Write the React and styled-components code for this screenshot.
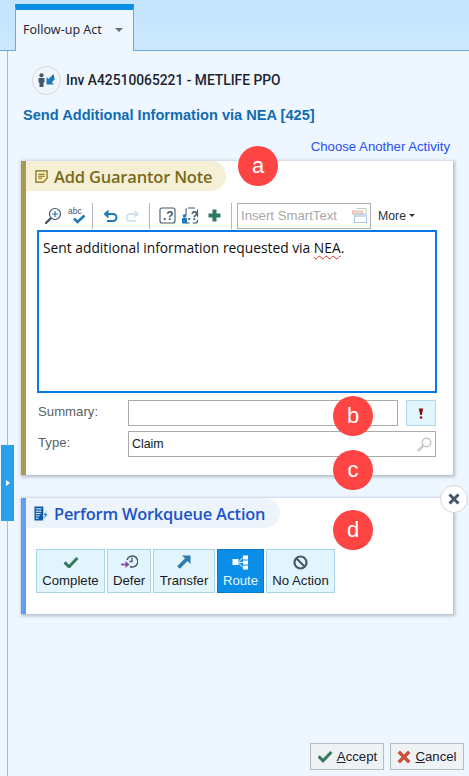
import React from "react";
import styled, { createGlobalStyle } from "styled-components";

const Global = createGlobalStyle`
  html, body { margin: 0; padding: 0; background: #eef6ff; }
  body { font-family: "Liberation Sans", Arial, sans-serif; }
  * { box-sizing: border-box; }
`;

const Page = styled.div`
  position: relative;
  width: 469px;
  height: 776px;
  overflow: hidden;
  display: flex;
  flex-direction: column;
  background: #eef6ff;
`;
const TopBar = styled.div`
  height: 51px;
  flex: none;
  padding: 4px 0 0 15px;
  background: linear-gradient(#c3e4fd, #cbe8fe);
  border-bottom: 1px solid #62ade2;
  display: flex;
`;
const Tab = styled.div`
  width: 119px;
  height: 47px;
  background: #eef6ff;
  border-top: 6px solid #0a8ee8;
  border-left: 1px solid #62ade2;
  border-right: 1px solid #62ade2;
  display: flex;
  align-items: center;
  padding: 0 0 3px 7px;
  font: 12.5px "Noto Sans", sans-serif;
  color: #2a2a3a;
  gap: 13px;
`;
const Caret = styled.span`
  width: 0;
  height: 0;
  border-left: 4px solid transparent;
  border-right: 4px solid transparent;
  border-top: 4px solid #66707c;
  margin-top: 2px;
`;
const Body = styled.div`
  flex: 1;
  margin-left: 7px;
  border-left: 1px solid #8cc4ec;
  padding: 14px 16px 0 13px;
  display: flex;
  flex-direction: column;
  min-height: 0;
`;
const InvRow = styled.div`
  display: flex;
  align-items: center;
  gap: 5px;
  padding-left: 11px;
  height: 30px;
`;
const AvatarRing = styled.div`
  width: 29px;
  height: 29px;
  border-radius: 50%;
  border: 1px solid #d5d8dc;
  background: #f2f6fa;
  display: flex;
  align-items: center;
  justify-content: center;
`;
const InvText = styled.div`
  font: 500 13.8px Roboto, sans-serif;
  color: #20242c;
`;
const Title = styled.div`
  margin: 10px 0 0 2px;
  font: 700 14.6px "Liberation Sans", sans-serif;
  color: #0f6cb0;
  height: 20px;
  line-height: 20px;
`;
const ChooseLink = styled.a`
  align-self: flex-end;
  margin: 14px 3px 0 0;
  height: 16px;
  line-height: 16px;
  font: 13.2px "Liberation Sans", sans-serif;
  color: #2a50f0;
`;
const Card = styled.section`
  flex: none;
  width: 432px;
  background: #fff;
  border-left: 5px solid ${(p) => p.$accent};
  box-shadow: 1px 1px 3px 1px rgba(70, 85, 100, 0.35);
`;
const NoteCard = styled(Card)`
  margin-top: 6px;
  height: 314px;
`;
const ActionCard = styled(Card)`
  margin-top: 23px;
  height: 116px;
`;
const Pill = styled.div`
  display: inline-flex;
  align-items: center;
  gap: 6px;
  height: 30px;
  padding: 0 ${(p) => p.$end}px 0 ${(p) => p.$pad}px;
  border-radius: 0 15px 15px 0;
  background: ${(p) => p.$bg};
  color: ${(p) => p.$color};
  font: 600 ${(p) => p.$size}px "Open Sans", sans-serif;
  letter-spacing: -0.2px;
`;
const Toolbar = styled.div`
  display: flex;
  align-items: center;
  height: 27px;
  margin-top: 11px;
  padding-left: 18px;
`;
const ToolIcon = styled.span`
  width: ${(p) => p.$w}px;
  margin-left: ${(p) => p.$ml || 0}px;
  height: 22px;
  display: flex;
  align-items: center;
  justify-content: center;
`;
const Sep = styled.span`
  width: 1px;
  height: 26px;
  background: #b4b8bc;
  margin-left: ${(p) => p.$ml}px;
`;
const SmartText = styled.div`
  width: 134px;
  height: 26px;
  margin-left: 5px;
  border: 1px solid #b0b0b0;
  display: flex;
  align-items: center;
  justify-content: space-between;
  padding: 0 3px 0 3px;
  font: 13.2px "Liberation Sans", sans-serif;
  color: #a8a8a8;
`;
const More = styled.div`
  display: flex;
  align-items: center;
  gap: 3px;
  margin-left: 7px;
  font: 12.3px "Liberation Sans", sans-serif;
  color: #2a3340;
`;
const SmallCaret = styled(Caret)`
  border-left-width: 3px;
  border-right-width: 3px;
  border-top: 3px solid #333;
  margin-top: 0;
`;
const NoteArea = styled.div`
  margin: 1px 0 0 11px;
  width: 400px;
  height: 163px;
  border: 2px solid #0a78e8;
  padding: 8px 4px;
  font: 13.8px/16px "Open Sans", sans-serif;
  color: #101010;
`;
const Squiggle = styled.span`
  text-decoration: underline wavy #d03030 1px;
  text-underline-offset: 2px;
`;
const FormRow = styled.div`
  display: flex;
  align-items: center;
  margin-top: ${(p) => p.$mt}px;
  padding-left: 12px;
`;
const FieldLabel = styled.label`
  width: 90px;
  font: 13.2px "Liberation Sans", sans-serif;
  color: #5a5f66;
  margin-top: -3px;
`;
const FieldBox = styled.div`
  height: 26px;
  width: ${(p) => p.$w}px;
  border: 1px solid #aaa;
  background: #fff;
  display: flex;
  align-items: center;
  justify-content: space-between;
  padding: 0 3px;
  font: 12.4px "Liberation Sans", sans-serif;
  color: #101828;
`;
const AlertButton = styled.div`
  width: 30px;
  height: 26px;
  margin-left: 8px;
  background: #e2f5fd;
  border: 1px solid #b0d8e8;
  display: flex;
  align-items: center;
  justify-content: center;
`;
const Actions = styled.div`
  display: flex;
  gap: 2px;
  margin: 21px 0 0 10px;
`;
const ActionButton = styled.button`
  width: ${(p) => p.$w}px;
  height: 44px;
  border: 1px solid ${(p) => (p.$active ? "#0a78c8" : "#a8d6e6")};
  background: ${(p) => (p.$active ? "#0a8ee8" : "#e2f5fd")};
  color: ${(p) => (p.$active ? "#eaf6ff" : "#1a1a24")};
  font: 13.2px "Liberation Sans", sans-serif;
  white-space: nowrap;
  display: flex;
  flex-direction: column;
  align-items: center;
  justify-content: flex-start;
  gap: 2px;
  padding: 3px 0 0;
`;
const IconSlot = styled.span`
  height: 18px;
  display: flex;
  align-items: center;
`;
const Footer = styled.div`
  margin-top: auto;
  display: flex;
  justify-content: flex-end;
  gap: 6px;
  padding-bottom: 6px;
  margin-right: -11px;
`;
const FootButton = styled.button`
  width: ${(p) => p.$w}px;
  height: 27px;
  padding: 0;
  border: 1px solid #b8bcc0;
  background: #eef2f5;
  display: flex;
  align-items: center;
  justify-content: center;
  gap: 4px;
  font: 13.2px "Liberation Sans", sans-serif;
  color: #1a2030;
  u { text-underline-offset: 1px; }
`;
const Marker = styled.div`
  position: absolute;
  left: ${(p) => p.$x}px;
  top: ${(p) => p.$y}px;
  width: 40px;
  height: 40px;
  border-radius: 50%;
  background: #ff4444;
  color: #fff;
  font: 22px/39px "Liberation Sans", sans-serif;
  text-align: center;
`;
const CloseBubble = styled.div`
  position: absolute;
  left: 440px;
  top: 485px;
  width: 28px;
  height: 28px;
  border-radius: 50%;
  background: #fff;
  border: 1px solid #d4d8dc;
  display: flex;
  align-items: center;
  justify-content: center;
`;
const SideHandle = styled.div`
  position: absolute;
  left: 1px;
  top: 445px;
  width: 13px;
  height: 76px;
  background: #2a9fea;
  display: flex;
  align-items: center;
  justify-content: center;
`;
const HandleArrow = styled.span`
  width: 0;
  height: 0;
  border-top: 3px solid transparent;
  border-bottom: 3px solid transparent;
  border-left: 4px solid #fff;
`;

const Avatar = () => (
  <svg width="17" height="14" viewBox="0 0 17 14">
    <circle cx="3.500" cy="2.300" r="2.100" fill="#46576a" />
    <path d="M0.500 5h6v4.500H5.500V14h-4V9.500h-1z" fill="#46576a" />
    <path d="M15.500 1L10.500 6 8.500 4v7.500H16L13.800 9.300l3-3L15.500 1z" fill="#1d7ab8" />
  </svg>
);
const NoteIcon = () => (
  <svg width="13" height="13" viewBox="0 0 14 14">
    <path d="M1 1h12v8l-4 4H1z" fill="#fbf0b8" stroke="#7a6a1a" strokeWidth="1.300" />
    <path d="M3.500 4.500h7M3.500 6.800h7M3.500 9h4" stroke="#7a6a1a" strokeWidth="1.100" />
  </svg>
);
const ZoomIcon = () => (
  <svg width="18" height="18" viewBox="0 0 18 18">
    <circle cx="11" cy="7" r="5.500" fill="none" stroke="#3f5468" strokeWidth="1.200" />
    <path d="M8 7h6M11 4v6" stroke="#1d7ab8" strokeWidth="1.200" />
    <path d="M6.500 11.500L2 16" stroke="#3f5468" strokeWidth="2.400" strokeLinecap="round" />
  </svg>
);
const SpellIcon = () => (
  <svg width="18" height="18" viewBox="0 0 18 18">
    <text x="0" y="7" fontFamily="Liberation Sans" fontSize="8.500" fill="#3f5468">abc</text>
    <path d="M6 11.500l3.500 3.500L16.500 8.500" fill="none" stroke="#1d7ab8" strokeWidth="2.600" />
  </svg>
);
const Undo = ({ c, flip }) => (
  <svg width="15" height="13" viewBox="0 0 15 13" style={flip ? { transform: "scaleX(-1)" } : undefined}>
    <path d="M2 5h8a3.500 3.500 0 0 1 0 7H4" fill="none" stroke={c} strokeWidth="2" />
    <path d="M5.500 0.500v9L0.500 5z" fill={c} />
  </svg>
);
const HelpBox = ({ person }) => (
  <svg width="18" height="17" viewBox="0 0 18 17">
    <rect x={person ? 5 : 2} y="1" width={person ? 11.500 : 15} height="15" rx="2" fill="none" stroke="#46576a" strokeWidth="1.100" strokeDasharray={person ? "7 3" : "none"} />
    <text x={person ? 6.500 : 5} y="13" fontFamily="Liberation Sans" fontWeight="700" fontSize="12" fill="#46576a">.?</text>
    {person && (
      <g fill="#1d7ab8">
        <circle cx="3.500" cy="9" r="1.800" />
        <rect x="1" y="11" width="5" height="5.500" />
      </g>
    )}
  </svg>
);
const Plus = () => (
  <svg width="13" height="13" viewBox="0 0 13 13">
    <path d="M4.500 0.500h4v4h4v4h-4v4h-4v-4h-4v-4h4z" fill="#2f7a5c" />
  </svg>
);
const WindowsIcon = () => (
  <svg width="15" height="15" viewBox="0 0 15 15">
    <path d="M4.500 0.500h9.500v4" fill="none" stroke="#b8d0bc" />
    <rect x="0.500" y="3" width="10" height="3" fill="#f4ddd2" stroke="#e8b8a0" />
    <rect x="2.500" y="6" width="12" height="8.500" fill="#fff" stroke="#a8c4d8" />
    <rect x="2.500" y="6" width="12" height="3" fill="#c4dcec" />
  </svg>
);
const Exclaim = () => (
  <svg width="6" height="11" viewBox="0 0 6 11">
    <path d="M0.800 0.500h4.400L3.800 7H2.200z" fill="#8a1010" />
    <circle cx="3" cy="9.500" r="1.300" fill="#8a1010" />
  </svg>
);
const SearchIcon = () => (
  <svg width="15" height="15" viewBox="0 0 15 15">
    <circle cx="9.500" cy="5.500" r="4.300" fill="none" stroke="#c4c8cc" strokeWidth="1.500" />
    <path d="M6 9L1.500 13.500" stroke="#c4c8cc" strokeWidth="2.400" strokeLinecap="round" />
  </svg>
);
const WqIcon = () => (
  <svg width="14" height="15" viewBox="0 0 15 16">
    <path d="M0.500 0.500h9.500v15h-9.500z" fill="#0b5aa8" />
    <path d="M2 3h6M2 5.500h6M2 8h5M2 10.500h4M2 13h3" stroke="#fff" strokeWidth="1" />
    <path d="M14.500 4l-5 6h2.500l-2.500 5.500 5.500-7h-2.500l2-4.500z" fill="#0b5aa8" stroke="#fff" strokeWidth="0.600" />
  </svg>
);
const Check = ({ s = 16 }) => (
  <svg width={s} height={s * 0.8} viewBox="0 0 16 13">
    <path d="M1.500 6.500l4.500 4.500L14.500 2" fill="none" stroke="#37785c" strokeWidth="3" />
  </svg>
);
const DeferIcon = () => (
  <svg width="18" height="16" viewBox="0 0 18 16">
    <path d="M7 6a5.500 5.500 0 1 1 3 6.500" fill="none" stroke="#46576a" strokeWidth="1.500" />
    <path d="M12 3.500V7.500H9.500" fill="none" stroke="#46576a" strokeWidth="1.300" />
    <path d="M1 10.500h6" stroke="#8a4aa8" strokeWidth="1.800" />
    <path d="M5.500 7l4 3.500-4 3.500z" fill="#8a4aa8" />
  </svg>
);
const TransferIcon = () => (
  <svg width="14" height="14" viewBox="0 0 14 14">
    <path d="M1.500 12.500L9.500 4.500" stroke="#2a7ba8" strokeWidth="3.800" />
    <path d="M5 0.500h8.500V9z" fill="#2a7ba8" />
  </svg>
);
const RouteIcon = () => (
  <svg width="17" height="15" viewBox="0 0 17 15" fill="#fff">
    <rect x="0.500" y="4" width="6" height="6" />
    <rect x="11" y="0.500" width="5" height="4" />
    <rect x="11" y="5.500" width="5" height="4" />
    <rect x="11" y="10.500" width="5" height="4" />
    <path d="M7 6.500L11 2.500M7 7.500h4M7 8.500l4 4" stroke="#fff" strokeWidth="1" />
  </svg>
);
const NoIcon = () => (
  <svg width="15" height="15" viewBox="0 0 15 15">
    <circle cx="7.500" cy="7.500" r="6" fill="none" stroke="#46576a" strokeWidth="2.200" />
    <path d="M3.500 3.500l8 8" stroke="#46576a" strokeWidth="2.200" />
  </svg>
);
const Cross = ({ c, s = 14, w = 3 }) => (
  <svg width={s} height={s} viewBox="0 0 12 12">
    <path d="M1.500 1.500l9 9M10.500 1.500l-9 9" stroke={c} strokeWidth={w} />
  </svg>
);

export default function App() {
  return (
    <Page>
      <Global />
      <TopBar>
        <Tab>
          Follow-up Act
          <Caret />
        </Tab>
      </TopBar>
      <Body>
        <InvRow>
          <AvatarRing><Avatar /></AvatarRing>
          <InvText>Inv A42510065221 - METLIFE PPO</InvText>
        </InvRow>
        <Title>Send Additional Information via NEA [425]</Title>
        <ChooseLink>Choose Another Activity</ChooseLink>
        <NoteCard $accent="#a89a50">
          <Pill $bg="#f5efd6" $color="#7a6a1a" $pad={9} $end={14} $size={16.5}>
            <NoteIcon />
            Add Guarantor Note
          </Pill>
          <Toolbar>
            <ToolIcon $w={18}><ZoomIcon /></ToolIcon>
            <ToolIcon $w={18} $ml={6}><SpellIcon /></ToolIcon>
            <Sep $ml={6} />
            <ToolIcon $w={15} $ml={10}><Undo c="#1d7ab8" /></ToolIcon>
            <ToolIcon $w={15} $ml={7}><Undo c="#d4e4ec" flip /></ToolIcon>
            <Sep $ml={9} />
            <ToolIcon $w={18} $ml={8}><HelpBox /></ToolIcon>
            <ToolIcon $w={18} $ml={5}><HelpBox person /></ToolIcon>
            <ToolIcon $w={13} $ml={9}><Plus /></ToolIcon>
            <Sep $ml={10} />
            <SmartText>Insert SmartText<WindowsIcon /></SmartText>
            <More>More<SmallCaret /></More>
          </Toolbar>
          <NoteArea>
            Sent additional information requested via <Squiggle>NEA</Squiggle>.
          </NoteArea>
          <FormRow $mt={7}>
            <FieldLabel>Summary:</FieldLabel>
            <FieldBox $w={270} />
            <AlertButton><Exclaim /></AlertButton>
          </FormRow>
          <FormRow $mt={5}>
            <FieldLabel>Type:</FieldLabel>
            <FieldBox $w={308}>Claim<SearchIcon /></FieldBox>
          </FormRow>
        </NoteCard>
        <ActionCard $accent="#5f9ef0">
          <Pill $bg="#edf4fb" $color="#1a55c9" $pad={8} $end={15} $size={16.4}>
            <WqIcon />
            Perform Workqueue Action
          </Pill>
          <Actions>
            <ActionButton $w={69}><IconSlot><Check /></IconSlot>Complete</ActionButton>
            <ActionButton $w={44}><IconSlot><DeferIcon /></IconSlot>Defer</ActionButton>
            <ActionButton $w={62}><IconSlot><TransferIcon /></IconSlot>Transfer</ActionButton>
            <ActionButton $w={47} $active><IconSlot><RouteIcon /></IconSlot>Route</ActionButton>
            <ActionButton $w={69}><IconSlot><NoIcon /></IconSlot>No Action</ActionButton>
          </Actions>
        </ActionCard>
        <Footer>
          <FootButton $w={74}><Check s={16} /><span><u>A</u>ccept</span></FootButton>
          <FootButton $w={74}><Cross c="#c8533a" /><span><u>C</u>ancel</span></FootButton>
        </Footer>
      </Body>
      <SideHandle><HandleArrow /></SideHandle>
      <Marker $x={238} $y={146}>a</Marker>
      <Marker $x={333} $y={396}>b</Marker>
      <Marker $x={333} $y={450}>c</Marker>
      <Marker $x={333} $y={510}>d</Marker>
      <CloseBubble><Cross c="#46576a" s={12} /></CloseBubble>
    </Page>
  );
}
